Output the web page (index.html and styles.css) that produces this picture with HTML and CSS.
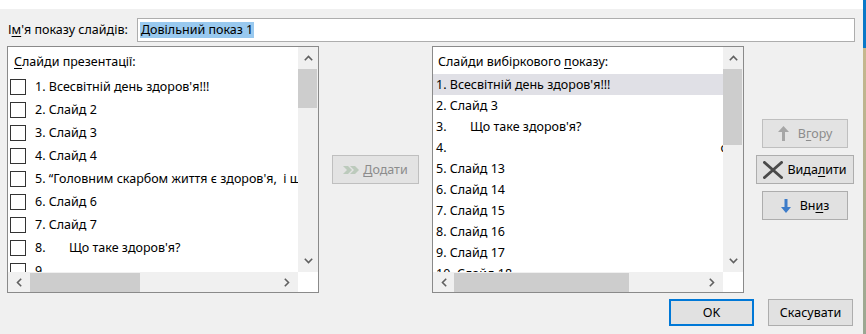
FILE: index.html
```html
<!DOCTYPE html>
<html lang="uk">
<head>
<meta charset="utf-8">
<title>Довільний показ</title>
<link rel="stylesheet" href="styles.css">
</head>
<body>
<div class="screen">
  <div class="dialog">
    <div class="topbar"></div>
    <div class="name-row">
      <label class="name-label">І<u>м</u>'я показу слайдів:</label>
      <div class="name-input"><span class="sel">Довільний показ 1</span></div>
    </div>
    <div class="main">
      <div class="listbox">
        <div class="lb-content">
          <div class="lb-label"><u>С</u>лайди презентації:</div>
          <div class="crow"><span class="cb"></span><span class="txt">1. Всесвітній день здоров'я!!!</span></div>
          <div class="crow"><span class="cb"></span><span class="txt">2. Слайд 2</span></div>
          <div class="crow"><span class="cb"></span><span class="txt">3. Слайд 3</span></div>
          <div class="crow"><span class="cb"></span><span class="txt">4. Слайд 4</span></div>
          <div class="crow"><span class="cb"></span><span class="txt">5. “Головним скарбом життя є здоров'я,  і щастя людини</span></div>
          <div class="crow"><span class="cb"></span><span class="txt">6. Слайд 6</span></div>
          <div class="crow"><span class="cb"></span><span class="txt">7. Слайд 7</span></div>
          <div class="crow"><span class="cb"></span><span class="txt"><span class="num">8.</span>Що таке здоров'я?</span></div>
          <div class="crow"><span class="cb"></span><span class="txt">9.</span></div>
        </div>
        <div class="vscroll">
          <span class="arrow"><svg width="9" height="6" viewBox="0 0 9 6"><polyline points="0.8,5.2 4.5,1.5 8.2,5.2" fill="none" stroke="#606060" stroke-width="1.6"/></svg></span>
          <span class="vthumb left-v"></span>
          <span class="vfill"></span>
          <span class="arrow"><svg width="9" height="6" viewBox="0 0 9 6"><polyline points="0.8,0.8 4.5,4.5 8.2,0.8" fill="none" stroke="#606060" stroke-width="1.6"/></svg></span>
        </div>
        <div class="hscroll">
          <span class="harrow"><svg width="6" height="9" viewBox="0 0 6 9"><polyline points="5.2,0.8 1.5,4.5 5.2,8.2" fill="none" stroke="#606060" stroke-width="1.6"/></svg></span>
          <span class="hthumb left-h"></span>
          <span class="hfill"></span>
          <span class="harrow"><svg width="6" height="9" viewBox="0 0 6 9"><polyline points="0.8,0.8 4.5,4.5 0.8,8.2" fill="none" stroke="#606060" stroke-width="1.6"/></svg></span>
        </div>
        <div class="corner"></div>
      </div>

      <div class="mid">
        <div class="btn disabled add-btn">
          <svg width="17" height="8" viewBox="0 0 17 8"><path d="M0 0 H5 L9 4 L5 8 H0 L4 4 Z" fill="#bccabc"/><path d="M7 0 H12 L16 4 L12 8 H7 L11 4 Z" fill="#bccabc"/></svg>
          <span><u>Д</u>одати</span>
        </div>
      </div>

      <div class="listbox">
        <div class="lb-content">
          <div class="lb-label r">Слайди вибіркового <u>п</u>оказу:</div>
          <div class="rrow selected">1. Всесвітній день здоров'я!!!</div>
          <div class="rrow">2. Слайд 3</div>
          <div class="rrow"><span class="num">3.</span>Що таке здоров'я?</div>
          <div class="rrow">4.<span class="spacer"></span>с</div>
          <div class="rrow">5. Слайд 13</div>
          <div class="rrow">6. Слайд 14</div>
          <div class="rrow">7. Слайд 15</div>
          <div class="rrow">8. Слайд 16</div>
          <div class="rrow">9. Слайд 17</div>
          <div class="rrow">10. Слайд 18</div>
        </div>
        <div class="vscroll">
          <span class="arrow"><svg width="9" height="6" viewBox="0 0 9 6"><polyline points="0.8,5.2 4.5,1.5 8.2,5.2" fill="none" stroke="#606060" stroke-width="1.6"/></svg></span>
          <span class="vthumb right-v"></span>
          <span class="vfill"></span>
          <span class="arrow"><svg width="9" height="6" viewBox="0 0 9 6"><polyline points="0.8,0.8 4.5,4.5 8.2,0.8" fill="none" stroke="#606060" stroke-width="1.6"/></svg></span>
        </div>
        <div class="hscroll">
          <span class="harrow"><svg width="6" height="9" viewBox="0 0 6 9"><polyline points="5.2,0.8 1.5,4.5 5.2,8.2" fill="none" stroke="#606060" stroke-width="1.6"/></svg></span>
          <span class="hthumb right-h"></span>
          <span class="hfill"></span>
          <span class="harrow"><svg width="6" height="9" viewBox="0 0 6 9"><polyline points="0.8,0.8 4.5,4.5 0.8,8.2" fill="none" stroke="#606060" stroke-width="1.6"/></svg></span>
        </div>
        <div class="corner"></div>
      </div>

      <div class="side">
        <div class="btn disabled side-btn">
          <svg width="11" height="15" viewBox="0 0 11 15"><path d="M5.5 0 L11 6 H7 V15 H4 V6 H0 Z" fill="#a6a6a6"/></svg>
          <span>В<u>г</u>ору</span>
        </div>
        <div class="btn del-btn">
          <svg width="20" height="18" viewBox="0 0 20 18"><path d="M1.5 1.5 L18.5 16.5 M18.5 1.5 L1.5 16.5" stroke="#4a4a4a" stroke-width="3" stroke-linecap="round"/></svg>
          <span>Вида<u>л</u>ити</span>
        </div>
        <div class="btn side-btn">
          <svg width="10" height="14" viewBox="0 0 10 14"><path d="M3.5 0 H6.5 V8 H10 L5 14 L0 8 H3.5 Z" fill="#3d7cc9"/></svg>
          <span>Вн<u>и</u>з</span>
        </div>
      </div>
    </div>
    <div class="footer">
      <div class="btn ok-btn">OK</div>
      <div class="btn cancel-btn">Скасувати</div>
    </div>
  </div>
  <div class="edge"><div class="edge-blue"></div><div class="edge-tan"></div></div>
</div>
</body>
</html>
```
FILE: styles.css
```css
* { box-sizing: border-box; }
html, body { margin: 0; padding: 0; }
body {
  width: 866px;
  height: 334px;
  overflow: hidden;
  background: #f0f0f0;
  font-family: "Noto Sans", "Open Sans", sans-serif;
  font-size: 12.5px;
  color: #000;
}
u { text-decoration-thickness: 1px; text-underline-offset: 2px; }
.screen { display: flex; height: 334px; }
.dialog { width: 863px; background: #f0f0f0; }
.topbar { height: 9px; background: #fff; }
.edge { width: 3px; display: flex; flex-direction: column; }
.edge-blue { height: 48px; background: #0a78c8; }
.edge-tan { flex: 1; background: linear-gradient(#c6b88e, #9aa792); }

.name-row {
  display: flex;
  align-items: center;
  padding: 9px 8px 0 8px;
  height: 33px;
}
.name-label { width: 129px; line-height: 24px; }
.name-input {
  flex: 1;
  height: 24px;
  border: 1px solid #adadad;
  background: #fff;
  padding: 2px 0 0 2px;
}
.sel { display: inline-block; background: #99c9ef; line-height: 16px; padding: 0 1px; }

.main {
  display: flex;
  align-items: center;
  margin-top: 4px;
  padding-left: 7px;
  height: 247px;
}
.listbox {
  width: 312px;
  height: 247px;
  border: 1px solid #8a8a8a;
  background: #fff;
  display: grid;
  grid-template-columns: 1fr 20px;
  grid-template-rows: 1fr 20px;
}
.lb-content { overflow: hidden; white-space: nowrap; min-width: 0; }
.lb-label { padding: 6px 0 4px 6px; line-height: 18px; height: 28px; }
.lb-label.r { padding-left: 5px; height: 27px; }
.crow { display: flex; align-items: center; height: 23px; }
.txt { white-space: pre; }
.cb {
  width: 16px; height: 16px;
  border: 1px solid #333;
  background: #fff;
  margin: 0 9px 0 2px;
  flex: none;
}
.num { display: inline-block; width: 34px; }
.rrow { height: 21px; line-height: 21px; padding-left: 3px; white-space: pre; }
.rrow.selected { background: #e0e0e6; }
.spacer { display: inline-block; width: 274px; }

.vscroll { background: #f0f0f0; display: flex; flex-direction: column; align-items: center; }
.arrow { height: 22px; width: 20px; display: flex; align-items: center; justify-content: center; flex: none; }
.vthumb { width: 19px; background: #cdcdcd; flex: none; margin-left: -1px; }
.left-v { height: 39px; }
.right-v { height: 76px; }
.vfill { flex: 1; }
.hscroll { background: #f0f0f0; display: flex; align-items: center; }
.harrow { width: 22px; height: 20px; display: flex; align-items: center; justify-content: center; flex: none; }
.hthumb { height: 19px; background: #cdcdcd; flex: none; }
.left-h { width: 110px; }
.right-h { width: 175px; margin-left: -1px; }
.hfill { flex: 1; }
.corner { background: #fff; }

.btn {
  display: flex;
  align-items: center;
  justify-content: center;
  gap: 4px;
  background: #e1e1e1;
  border: 1px solid #adadad;
  height: 29px;
}
.btn.disabled { background: #e3e3e3; border-color: #bfbfbf; color: #8c8c8c; }
.mid { width: 113px; display: flex; justify-content: center; }
.add-btn { width: 87px; gap: 3px; }
.side {
  width: 98px;
  margin-left: 12px;
  display: flex;
  flex-direction: column;
  align-items: center;
  gap: 7px;
}
.side-btn { width: 86px; gap: 9px; }
.del-btn { width: 98px; gap: 4px; }

.footer {
  display: flex;
  justify-content: flex-end;
  gap: 14px;
  padding-right: 10px;
  margin-top: 6px;
}
.ok-btn, .cancel-btn { width: 85px; height: 27px; }
.ok-btn { border: 2px solid #0078d7; }
```
